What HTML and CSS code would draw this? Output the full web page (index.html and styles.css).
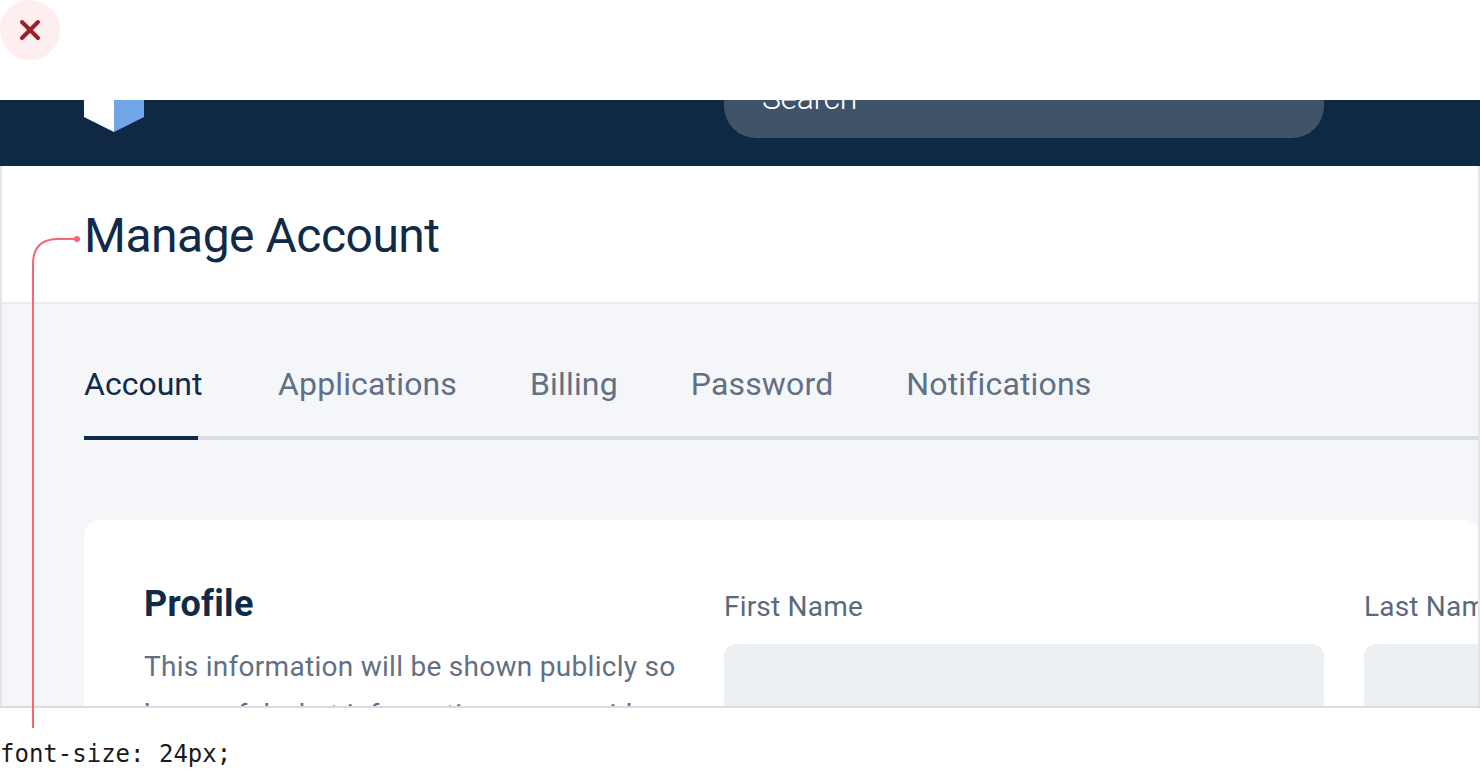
FILE: index.html
```html
<!DOCTYPE html>
<html>
<head>
    <title>Manage Account</title>
    <link rel="stylesheet" href="styles.css">
</head>
<body>

<div class="top">
    <div class="badge">
        <svg width="24" height="24" viewBox="0 0 24 24"><path class="cross" d="M4 4 L20 20 M20 4 L4 20"/></svg>
    </div>
</div>

<div class="frame">
    <div class="navbar">
        <svg class="logo" width="60" height="32" viewBox="0 0 60 32">
            <path class="logo-left" d="M0 0 H30 V32 L0 17 Z"/>
            <path class="logo-right" d="M30 0 H60 V17 L30 32 Z"/>
        </svg>
        <div class="search">Search</div>
    </div>

    <div class="title-bar">
        <h1>Manage Account</h1>
    </div>

    <div class="content">
        <div class="tabs">
            <a class="tab active">Account</a>
            <a class="tab">Applications</a>
            <a class="tab">Billing</a>
            <a class="tab">Password</a>
            <a class="tab">Notifications</a>
        </div>

        <div class="card">
            <div class="intro">
                <h2>Profile</h2>
                <p>This information will be shown publicly so be careful what information you provide.</p>
            </div>
            <div class="field">
                <label>First Name</label>
                <div class="input"></div>
            </div>
            <div class="field">
                <label>Last Name</label>
                <div class="input"></div>
            </div>
        </div>
    </div>
</div>

<svg class="callout" width="90" height="500" viewBox="0 0 90 500">
    <path class="callout-line" d="M33 494 V30 Q33 5 58 5 H76"/>
    <circle class="callout-dot" cx="77" cy="5" r="3"/>
</svg>

<div class="caption">font-size: 24px;</div>

</body>
</html>
```

FILE: styles.css
```css
html, body {
    margin: 0;
    padding: 0;
    background-color: #fff;
    overflow: hidden;
}

body {
    position: relative;
    height: 780px;
    font-family: Roboto, sans-serif;
}

.top {
    height: 100px;
}

.badge {
    width: 60px;
    height: 60px;
    border-radius: 50%;
    background-color: #feeeee;
    display: flex;
    align-items: center;
    justify-content: center;
}

.cross {
    fill: none;
    stroke: #9b2027;
    stroke-width: 4;
    stroke-linecap: round;
}

.frame {
    position: relative;
    height: 608px;
    box-sizing: border-box;
    overflow: hidden;
    border-bottom: 2px solid #d8dbe0;
}

/* side edges of the shot, they sit over the card and the tab line */
.frame::after {
    content: "";
    position: absolute;
    left: 0;
    right: 0;
    top: 66px;
    bottom: 0;
    border-left: 2px solid #e2e4e8;
    border-right: 2px solid #e2e4e8;
}

.navbar {
    height: 66px;
    padding-left: 84px;
    background-color: #0f2945;
    display: flex;
    align-items: flex-end;
}

.logo {
    margin-bottom: 34px;
    flex: none;
}

.logo-left {
    fill: #fff;
}

.logo-right {
    fill: #70a5e8;
}

.search {
    flex: none;
    width: 600px;
    height: 80px;
    box-sizing: border-box;
    margin-left: 580px;
    margin-bottom: 28px;
    padding-left: 38px;
    border-radius: 32px;
    background-color: #405469;
    color: #fff;
    font-size: 32px;
    font-weight: 300;
    line-height: 80px;
    letter-spacing: -0.4px;
}

.title-bar {
    height: 138px;
    box-sizing: border-box;
    padding: 4px 0 0 84px;
    border-bottom: 2px solid #e9ebef;
    display: flex;
    align-items: center;
}

h1 {
    margin: 0;
    color: #102a47;
    font-size: 48px;
    font-weight: 400;
    line-height: 64px;
    letter-spacing: -0.5px;
}

.content {
    height: 404px;
    padding: 46px 0 0 84px;
    background-color: #f4f6fa;
}

.tabs {
    height: 86px;
    border-bottom: 4px solid #d9dee4;
    display: flex;
    gap: 73px;
}

.tab {
    height: 86px;
    color: #627084;
    font-size: 32px;
    line-height: 68px;
    letter-spacing: 0.15px;
    white-space: nowrap;
}

.tab.active {
    width: 114px;
    margin-right: 7px;
    color: #102a47;
    border-bottom: 4px solid #102a47;
    letter-spacing: 0;
}

.card {
    margin-top: 80px;
    height: 300px;
    padding: 60px 0 0 60px;
    border-radius: 16px;
    background-color: #fff;
    display: flex;
}

.intro {
    flex: none;
    width: 540px;
    margin-right: 40px;
}

h2 {
    margin: 0;
    color: #102a47;
    font-size: 36px;
    font-weight: 700;
    line-height: 48px;
    letter-spacing: 0.3px;
}

.intro p {
    margin: 15px 0 0;
    color: #627084;
    font-size: 28px;
    line-height: 48px;
    letter-spacing: 0.28px;
}

.field {
    flex: none;
    width: 600px;
    margin-right: 40px;
}

label {
    display: block;
    padding-top: 1px;
    height: 51px;
    color: #5a6a7e;
    font-size: 28px;
    line-height: 52px;
    letter-spacing: 0.2px;
}

.input {
    height: 120px;
    margin-top: 12px;
    border-radius: 12px;
    background-color: #edf0f3;
}

.callout {
    position: absolute;
    left: 0;
    top: 234px;
}

.callout-line {
    fill: none;
    stroke: #f26a6f;
    stroke-width: 2;
}

.callout-dot {
    fill: #f26a6f;
}

.caption {
    position: absolute;
    left: 0;
    top: 738px;
    color: #1a1a1a;
    font-family: "DejaVu Sans Mono", monospace;
    font-size: 24px;
    line-height: 32px;
}
```
